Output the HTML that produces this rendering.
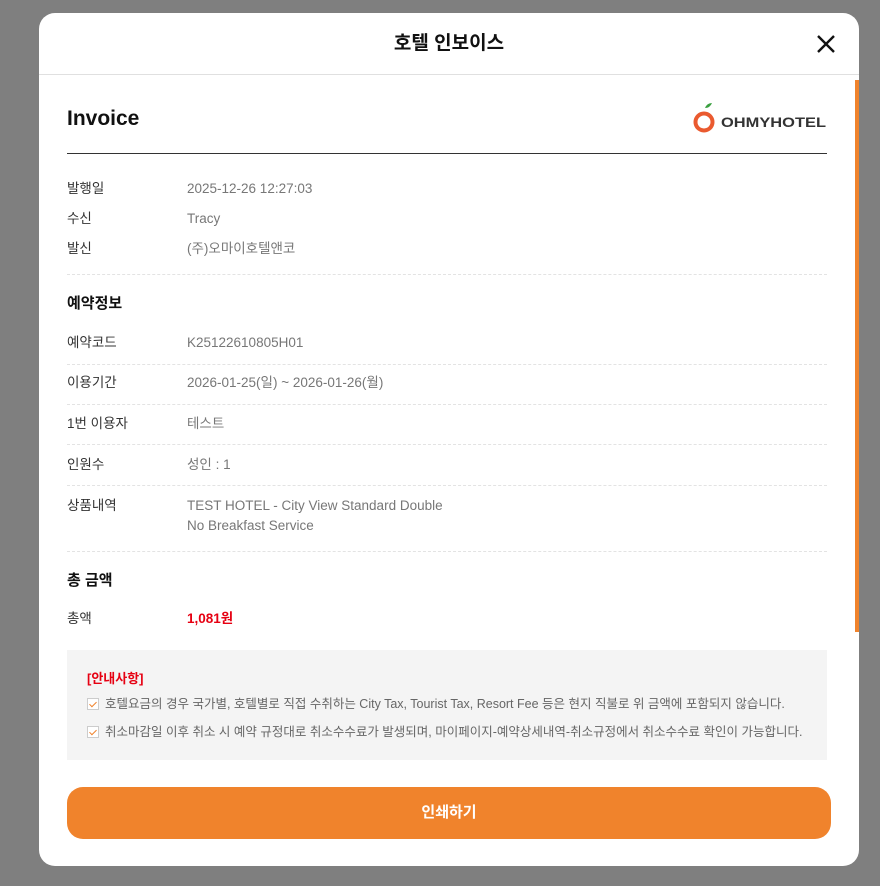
<!DOCTYPE html>
<html><head><meta charset="utf-8"><style>
*{box-sizing:border-box;margin:0;padding:0}
body{width:880px;height:886px;background:#7f7f7f;font-family:"Liberation Sans","Noto Sans CJK KR",sans-serif;position:relative;overflow:hidden}
.modal{position:absolute;left:39px;top:13px;width:820px;height:853px;background:#fff;border-radius:16px;overflow:hidden}
.hdr{height:62px;border-bottom:1px solid #e0e0e0;text-align:center;font-size:19px;font-weight:bold;line-height:62px;color:#111}
.x{position:absolute;right:22px;top:20px;width:22px;height:22px}
.sb{position:absolute;left:816px;top:67px;width:4px;height:552px;background:#f0832c}
.c{position:absolute;left:28px;top:62px;width:760px}
.inv{font-size:21px;font-weight:bold;color:#111;position:absolute;top:32px;left:0}
.line{position:absolute;top:78px;left:0;width:760px;height:1px;background:#333}
.row{position:absolute;left:0;font-size:13.5px;color:#333;line-height:20px;height:20px}
.row span{position:absolute;left:120px;top:0;line-height:20px;color:#777;white-space:nowrap}
.dash{position:absolute;left:0;width:760px;border-top:1px dashed #e3e3e3}
.sec{position:absolute;left:0;font-size:15px;font-weight:bold;color:#111;line-height:22px}
.note{position:absolute;left:0;top:575px;width:760px;height:110px;background:#f4f4f4;padding:18px 20px}
.note b{color:#e60012;font-size:13px;font-weight:bold;display:block;margin-bottom:7px}
.note p{font-size:12.5px;color:#666;margin-bottom:8px;white-space:nowrap;display:flex;align-items:center;line-height:20px}
.cb{width:12px;height:12px;border:1px solid #ccc;background:#fff;margin-right:6px;display:inline-block;position:relative}
.cb:after{content:"";position:absolute;left:3px;top:1px;width:3px;height:6px;border:solid #f0832c;border-width:0 1.5px 1.5px 0;transform:rotate(45deg)}
.btn{position:absolute;left:0;top:712px;width:764px;height:52px;background:#f0832c;border-radius:16px;color:#fff;font-weight:bold;font-size:15px;text-align:center;line-height:52px}
</style></head><body>
<div class="modal">
<div class="hdr">호텔 인보이스</div>
<svg class="x" viewBox="0 0 22 22"><path d="M3 3L19 19M19 3L3 19" stroke="#111" stroke-width="2.4"/></svg>
<div class="sb"></div>
<div class="c">
<div class="inv">Invoice</div>
<svg style="position:absolute;left:626px;top:27px" width="136" height="34" viewBox="0 0 136 34">
<path d="M12 6 q2-5 7-5 q-2 5-7 5z" fill="#3aa040"/>
<circle cx="11" cy="20" r="8.5" fill="none" stroke="#ea5a2f" stroke-width="4"/>
<text x="28" y="25" font-family="Liberation Sans" font-weight="bold" font-size="13.5" fill="#333" textLength="105" lengthAdjust="spacingAndGlyphs">OHMYHOTEL</text>
</svg>
<div class="line"></div>
<div class="row" style="top:104px">발행일<span>2025-12-26 12:27:03</span></div>
<div class="row" style="top:134px">수신<span>Tracy</span></div>
<div class="row" style="top:164px">발신<span>(주)오마이호텔앤코</span></div>
<div class="dash" style="top:199px"></div>
<div class="sec" style="top:218px">예약정보</div>
<div class="row" style="top:258px">예약코드<span>K25122610805H01</span></div>
<div class="dash" style="top:289px"></div>
<div class="row" style="top:298px">이용기간<span>2026-01-25(일) ~ 2026-01-26(월)</span></div>
<div class="dash" style="top:329px"></div>
<div class="row" style="top:339px">1번 이용자<span>테스트</span></div>
<div class="dash" style="top:369px"></div>
<div class="row" style="top:380px">인원수<span>성인 : 1</span></div>
<div class="dash" style="top:410px"></div>
<div class="row" style="top:421px">상품내역<span>TEST HOTEL - City View Standard Double<br>No Breakfast Service</span></div>
<div class="dash" style="top:476px"></div>
<div class="sec" style="top:495px">총 금액</div>
<div class="row" style="top:534px">총액<span style="color:#e60012;font-weight:bold">1,081원</span></div>
<div class="note"><b>[안내사항]</b>
<p><i class="cb"></i>호텔요금의 경우 국가별, 호텔별로 직접 수취하는 City Tax, Tourist Tax, Resort Fee 등은 현지 직불로 위 금액에 포함되지 않습니다.</p>
<p><i class="cb"></i>취소마감일 이후 취소 시 예약 규정대로 취소수수료가 발생되며, 마이페이지-예약상세내역-취소규정에서 취소수수료 확인이 가능합니다.</p>
</div>
<div class="btn">인쇄하기</div>
</div>
</div>
</body></html>
